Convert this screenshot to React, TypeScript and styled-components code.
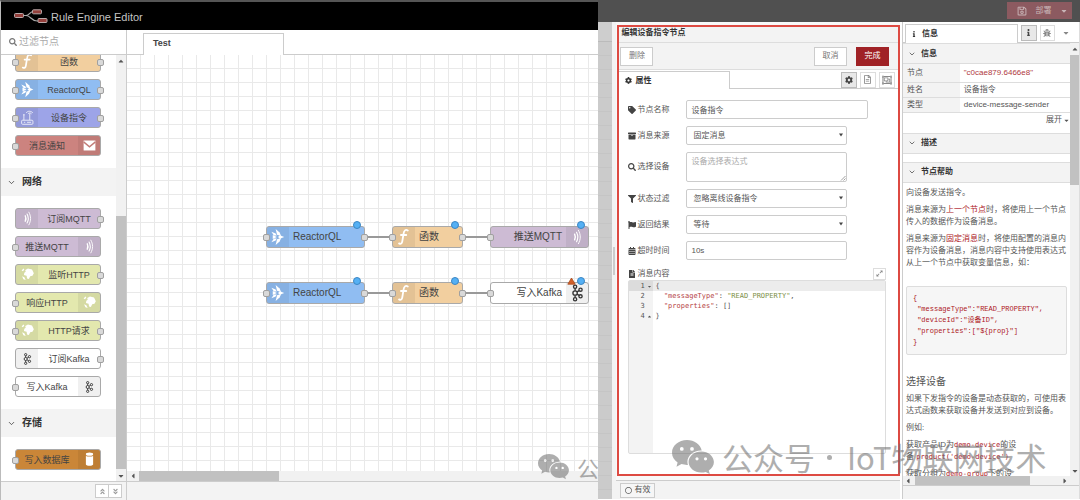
import React from 'react';
import styled, { createGlobalStyle, css } from 'styled-components';
import { ChevronDown } from 'lucide-react';
import {
  FaSearch, FaTag, FaArchive, FaFilter, FaFlag, FaCalendarAlt, FaFileAlt, FaCog,
  FaRegFileAlt, FaRegObjectGroup, FaInfo, FaBug, FaRegSave, FaCaretDown, FaCaretUp,
  FaCaretLeft, FaCaretRight, FaExpandAlt, FaRegCircle, FaAngleDoubleUp,
  FaAngleDoubleDown,
} from 'react-icons/fa';

const GlobalStyle = createGlobalStyle`
  *, *::before, *::after { box-sizing: border-box; }
  body {
    margin: 0;
    background: #fff;
    color: #555;
    font: 8px/12px "Liberation Sans", "Noto Sans CJK SC", sans-serif;
  }
  button, input, select, textarea { font: inherit; color: inherit; margin: 0; }
  svg { display: block; flex: none; }
`;

const line = '#ccc';
const panel = '#f3f3f3';

const Page = styled.div`
  display: flex;
  height: 100vh;
  overflow: hidden;
`;

/* ---------- shared ---------- */

const Bar = styled.div<{ $horizontal?: boolean; $size?: number }>`
  display: flex;
  flex: none;
  flex-direction: ${p => (p.$horizontal ? 'row' : 'column')};
  ${p => (p.$horizontal ? 'height' : 'width')}: ${p => p.$size ?? 10}px;
  background: #f1f1f1;
`;
const BarArrow = styled.span`
  display: flex;
  flex: 0 0 11px;
  align-items: center;
  justify-content: center;
  color: #555;
  svg { width: 8px; height: 8px; }
`;
const BarPart = styled.span<{ $grow: number; $thumb?: boolean }>`
  flex: ${p => p.$grow} 1 0;
  background: ${p => (p.$thumb ? '#c1c1c1' : 'transparent')};
`;

interface ScrollbarProps { before: number; thumb: number; after: number; horizontal?: boolean; size?: number; openEnd?: boolean }

function Scrollbar(p: ScrollbarProps) {
  return (
    <Bar $horizontal={p.horizontal} $size={p.size} aria-hidden>
      <BarArrow>{p.horizontal ? <FaCaretLeft /> : <FaCaretUp />}</BarArrow>
      <BarPart $grow={p.before} />
      <BarPart $grow={p.thumb} $thumb />
      <BarPart $grow={p.after} />
      {!p.openEnd && <BarArrow>{p.horizontal ? <FaCaretRight /> : <FaCaretDown />}</BarArrow>}
    </Bar>
  );
}

/* ---------- node icons ---------- */

type IconName = 'fn' | 'reactor' | 'device' | 'mail' | 'wave' | 'globe' | 'kafka' | 'db';

const icons: Record<IconName, React.ReactNode> = {
  fn: (
    <path d="M14.5 3.6c-2.4-1.4-4 .2-4.4 3L8.7 15c-.4 2.4-1.6 3.300-3.400 2.200M7.300 8.400h5.600" fill="none" stroke="#fff" strokeWidth="1.900" strokeLinecap="round" />
  ),
  reactor: (
    <g fill="#fff">
      <path d="M8 2l4.200 3.800 1.600 3.600-4.300-1.200z" />
      <path d="M8 19l4.200-3.800 1.600-3.600-4.300 1.200z" />
      <path d="M12.500 8.600l4.500 1.900-4.500 1.900-2-1.900z" />
      <path d="M3.600 5l4.400 1.800 1.200 2.200-3-.2z" />
      <path d="M3.600 16l4.400-1.800 1.200-2.200-3 .2z" />
      <path d="M5 8.400l4.400 2.100L5 12.600z" />
    </g>
  ),
  device: (
    <g fill="none" stroke="#fff" strokeWidth="1" opacity=".85">
      <rect x="4" y="13.500" width="12.500" height="4.500" rx="1" />
      <path d="M6.500 15.800h1.500M10 15.800h4.500M6.500 13.500V7.500M13 13.500V6M9 5.500c1.500-2.500 5.500-2.500 7.500 0M11 6.500c1-1.300 3-1.300 4 0M5.500 7.500h2" />
    </g>
  ),
  mail: (
    <g>
      <rect x="4" y="5" width="13" height="11" fill="#fff" />
      <path d="M4 6.500l6.500 5.500L17 6.500" fill="none" stroke="#c27b77" strokeWidth="1.500" />
    </g>
  ),
  wave: (
    <g fill="none" stroke="#fff" strokeLinecap="round">
      <path d="M8 7.500c1 2 1 4 0 6" strokeWidth="1.500" />
      <path d="M10 5.500c1.800 3.300 1.800 6.700 0 10" strokeWidth="1.200" />
      <path d="M12 3.500c2.600 4.700 2.600 9.300 0 14" strokeWidth="1" />
    </g>
  ),
  globe: (
    <g fill="#fff">
      <path d="M8 5.500l3-1.500 4.500 1 2 4-1.500 3-2.500.500-1.500 3-2-.5-.5-3-3-1 .5-2.500 1.500-1z" />
      <path d="M4 6l2-2 1 1-1.500 2zM4.500 12.500l2.500 1 1.500 3-2.500-.8z" />
    </g>
  ),
  kafka: (
    <g fill="none" stroke="#333" strokeWidth="1.400">
      <circle cx="8.500" cy="4" r="1.700" />
      <circle cx="8.500" cy="10.500" r="2.300" />
      <circle cx="8.500" cy="17" r="1.700" />
      <circle cx="14.200" cy="7" r="1.700" />
      <circle cx="14.200" cy="14" r="1.700" />
      <path d="M8.500 5.700v2.500M8.500 12.800v2.500M10.500 9.300l2.200-1.300M10.500 11.700l2.200 1.300" />
    </g>
  ),
  db: (
    <g fill="#fff">
      <path d="M6.500 6.300c1.500 1.300 6.500 1.300 8 0v9.700c-.5 1.900-7.500 1.900-8 0z" />
      <ellipse cx="10.500" cy="4.600" rx="4" ry="1.700" />
    </g>
  ),
};

const IconSvg = ({ name, size = 21 }: { name: IconName; size?: number }) => (
  <svg viewBox="0 0 21 21" width={size} height={size} aria-hidden>{icons[name]}</svg>
);

/* ---------- nodes ---------- */

const nodeBox = css<{ $color: string; $flip?: boolean }>`
  display: flex;
  flex-direction: ${p => (p.$flip ? 'row-reverse' : 'row')};
  background: ${p => p.$color};
  border: 1px solid #a9a9a9;
  border-radius: 3px;
  color: #444;
`;
const PaletteNode = styled.div<{ $color: string; $flip?: boolean }>`
  ${nodeBox}
  position: relative;
  height: 21px;
  font-size: 9px;
`;
const FlowNode = styled.div<{ $color: string; $flip?: boolean }>`
  ${nodeBox}
  position: absolute;
  height: 22px;
  font-size: 10px;
`;
const NodeIcon = styled.span<{ $flip?: boolean }>`
  display: flex;
  flex: 0 0 22px;
  align-items: center;
  justify-content: center;
  background: rgba(0, 0, 0, 0.06);
  border-radius: ${p => (p.$flip ? '0 2px 2px 0' : '2px 0 0 2px')};
`;
const NodeLabel = styled.span<{ $align: string }>`
  display: flex;
  flex: 1;
  align-items: center;
  justify-content: ${p => p.$align};
  padding: 0 4px;
  white-space: nowrap;
`;
const Port = styled.i<{ $side: 'left' | 'right' }>`
  position: absolute;
  top: calc(50% - 3px);
  ${p => p.$side}: -4px;
  width: 7px;
  height: 7px;
  background: #d9d9d9;
  border: 1px solid #a0a0a0;
  border-radius: 2px;
`;
const Changed = styled.i`
  position: absolute;
  top: -6px;
  right: 3px;
  width: 8px;
  height: 8px;
  border: 1px solid #3b86c4;
  border-radius: 50%;
  background: #55b0f4;
`;
const Warning = styled.svg`
  position: absolute;
  top: -6px;
  right: 12px;
`;

interface NodeDef { label: string; color: string; icon: IconName; flip?: boolean; input?: boolean; output?: boolean }

const N: Record<string, NodeDef> = {
  fn: { label: '函数', color: '#f2cf9f', icon: 'fn', input: true, output: true },
  reactor: { label: 'ReactorQL', color: '#90bdf2', icon: 'reactor', input: true, output: true },
  device: { label: '设备指令', color: '#9da4e8', icon: 'device', input: true, output: true },
  mail: { label: '消息通知', color: '#cc837f', icon: 'mail', flip: true, input: true },
  mqttIn: { label: '订阅MQTT', color: '#cdbbd4', icon: 'wave', output: true },
  mqttOut: { label: '推送MQTT', color: '#cdbbd4', icon: 'wave', flip: true, input: true },
  httpIn: { label: '监听HTTP', color: '#e3e8ae', icon: 'globe', output: true },
  httpOut: { label: '响应HTTP', color: '#e3e8ae', icon: 'globe', flip: true, input: true },
  httpReq: { label: 'HTTP请求', color: '#e3e8ae', icon: 'globe', input: true, output: true },
  kafkaIn: { label: '订阅Kafka', color: '#ffffff', icon: 'kafka', output: true },
  kafkaOut: { label: '写入Kafka', color: '#ffffff', icon: 'kafka', flip: true, input: true },
  db: { label: '写入数据库', color: '#ca8638', icon: 'db', flip: true, input: true },
};

const PaletteItem = ({ n }: { n: NodeDef }) => (
  <PaletteNode $color={n.color} $flip={n.flip}>
    <NodeIcon $flip={n.flip}><IconSvg name={n.icon} size={n.icon === 'kafka' ? 14 : 19} /></NodeIcon>
    <NodeLabel $align="center">{n.label}</NodeLabel>
    {n.input && <Port $side="left" />}
    {n.output && <Port $side="right" />}
  </PaletteNode>
);

const FlowItem = ({ n, x, y, w, last, warn }: { n: NodeDef; x: number; y: number; w: number; last?: boolean; warn?: boolean }) => (
  <FlowNode $color={n.color} $flip={n.flip} style={{ left: x, top: y, width: w }}>
    <NodeIcon $flip={n.flip}><IconSvg name={n.icon} size={20} /></NodeIcon>
    <NodeLabel $align={n.flip ? 'flex-end' : 'flex-start'}>{n.label}</NodeLabel>
    <Port $side="left" />
    {!last && <Port $side="right" />}
    {warn && (
      <Warning width="9" height="8" viewBox="0 0 9 8">
        <path d="M4.500 1L8.200 7.200H.8z" fill="#d2602a" stroke="#a84a1c" strokeWidth=".8" />
      </Warning>
    )}
    <Changed />
  </FlowNode>
);

/* ---------- left editor ---------- */

const Editor = styled.section`
  display: flex;
  flex: 598 1 0;
  flex-direction: column;
  min-width: 0;
  overflow: hidden;
  border-top: 2px solid #555;
  border-left: 1px solid #bbb;
`;
const EditorHeader = styled.header`
  display: flex;
  flex: 0 0 28px;
  align-items: center;
  gap: 3px;
  padding: 1px 0 0 13px;
  background: #000;
  color: #c4c4c4;
  font-size: 11px;
`;
const EditorBody = styled.div`
  display: flex;
  flex: 1;
  min-height: 0;
`;
const Palette = styled.aside`
  display: flex;
  flex: 0 0 126px;
  flex-direction: column;
  border-right: 1px solid ${line};
`;
const PaletteSearch = styled.label`
  display: flex;
  flex: 0 0 25px;
  align-items: center;
  gap: 2px;
  padding-left: 8px;
  border-bottom: 1px solid ${line};
  color: #777;
`;
const SearchInput = styled.input`
  width: 90px;
  padding: 0;
  border: 0;
  outline: 0;
  background: none;
  font-size: 10px;
  &::placeholder { color: #aaa; }
`;
const PaletteScroll = styled.div`
  display: flex;
  flex: 1;
  min-height: 0;
`;
const PaletteClip = styled.div`
  flex: 1;
  overflow: hidden;
`;
const PaletteContent = styled.div`
  margin-top: -4px;
`;
const CategoryTitle = styled.h2`
  display: flex;
  align-items: center;
  gap: 6px;
  height: 28px;
  margin: 0;
  padding-left: 6px;
  background: ${panel};
  color: #333;
  font-size: 10px;
`;
const CategoryNodes = styled.div<{ $first?: boolean }>`
  display: flex;
  flex-direction: column;
  gap: 7px;
  padding: ${p => (p.$first ? 0 : 12)}px 15px 12px 14px;
`;
const Footer = styled.footer<{ $height?: number }>`
  display: flex;
  flex: 0 0 ${p => p.$height ?? 19}px;
  align-items: center;
  justify-content: flex-end;
  padding-right: 4px;
  border-top: 1px solid ${line};
  background: ${panel};
`;
const FooterButton = styled.button`
  display: flex;
  align-items: center;
  justify-content: center;
  width: 14px;
  height: 14px;
  margin-left: -1px;
  padding: 0;
  border: 1px solid ${line};
  background: #fff;
  color: #999;
`;
const Workspace = styled.main`
  display: flex;
  flex: 1;
  flex-direction: column;
  min-width: 0;
`;
const FlowTabs = styled.nav`
  display: flex;
  flex: 0 0 25px;
  align-items: flex-end;
  padding-left: 16px;
  box-shadow: inset 0 -1px ${line};
`;
const FlowTab = styled.button`
  width: 141px;
  height: 22px;
  padding: 0 9px 3px;
  border: 1px solid ${line};
  border-bottom: 0;
  background: #fff;
  color: #444;
  font-size: 9px;
  font-weight: bold;
  text-align: left;
`;
const Canvas = styled.div`
  position: relative;
  flex: 1;
  overflow: hidden;
  background-image:
    linear-gradient(to right, transparent 13px, #e9e9e9 13px),
    linear-gradient(to bottom, transparent 13px, #e9e9e9 13px);
  background-size: 14px 14px;
`;
const Wires = styled.svg`
  position: absolute;
  inset: 0;
`;

const Logo = () => (
  <svg width="34" height="16" viewBox="0 0 34 16" aria-hidden>
    <path d="M9 6.500h3c4 0 3-4 8-4M12 6.500c5 0 5 6 12 5.500" fill="none" stroke="#aaa" strokeWidth="1.200" />
    <g fill="#95403c" stroke="#b9aaaa" strokeWidth="1">
      <rect x=".5" y="4.500" width="9" height="4" rx="1" />
      <rect x="18.500" y=".8" width="9" height="4" rx="1" />
      <rect x="24" y="9.500" width="9" height="4" rx="1" />
    </g>
  </svg>
);

function RuleEditor() {
  return (
    <Editor>
      <EditorHeader><Logo />Rule Engine Editor</EditorHeader>
      <EditorBody>
        <Palette>
          <PaletteSearch>
            <FaSearch size={8} />
            <SearchInput aria-label="过滤节点" placeholder="过滤节点" />
          </PaletteSearch>
          <PaletteScroll>
            <PaletteClip>
              <PaletteContent>
                <CategoryNodes $first>
                  {[N.fn, N.reactor, N.device, N.mail].map(n => <PaletteItem key={n.label} n={n} />)}
                </CategoryNodes>
                <CategoryTitle><ChevronDown size={9} />网络</CategoryTitle>
                <CategoryNodes>
                  {[N.mqttIn, N.mqttOut, N.httpIn, N.httpOut, N.httpReq, N.kafkaIn, N.kafkaOut].map(n => (
                    <PaletteItem key={n.label} n={n} />
                  ))}
                </CategoryNodes>
                <CategoryTitle><ChevronDown size={9} />存储</CategoryTitle>
                <CategoryNodes><PaletteItem n={N.db} /></CategoryNodes>
              </PaletteContent>
            </PaletteClip>
            <Scrollbar before={150} thumb={253} after={1} />
          </PaletteScroll>
          <Footer>
            <FooterButton aria-label="collapse"><FaAngleDoubleUp size={7} /></FooterButton>
            <FooterButton aria-label="expand"><FaAngleDoubleDown size={7} /></FooterButton>
          </Footer>
        </Palette>
        <Workspace>
          <FlowTabs><FlowTab>Test</FlowTab></FlowTabs>
          <Canvas>
            <Wires width="100%" height="100%">
              <path d="M238 182h28M335 182h29M238 238h28M335 238h29" stroke="#999" strokeWidth="2" />
            </Wires>
            {[171, 227].map((y, i) => (
              <React.Fragment key={y}>
                <FlowItem n={N.reactor} x={139} y={y} w={99} />
                <FlowItem n={N.fn} x={265} y={y} w={71} />
                <FlowItem n={i ? N.kafkaOut : N.mqttOut} x={363} y={y} w={99} last warn={i === 1} />
              </React.Fragment>
            ))}
          </Canvas>
          <Scrollbar horizontal before={1} thumb={140} after={319} openEnd />
          <Footer />
        </Workspace>
      </EditorBody>
    </Editor>
  );
}

/* ---------- right side ---------- */

const Detail = styled.section`
  display: flex;
  flex: 482 1 0;
  flex-direction: column;
  min-width: 0;
  padding-bottom: 1px;
`;
const DetailHeader = styled.header`
  display: flex;
  flex: 0 0 22px;
  align-items: center;
  justify-content: flex-end;
  padding: 0 8px 1px 0;
  background: #505050;
`;
const Deploy = styled.button`
  display: flex;
  align-items: center;
  justify-content: space-between;
  width: 65px;
  height: 17px;
  padding: 0 4px 0 10px;
  border: 0;
  background: #8c5a60;
  color: #c9b5b7;
`;
const DetailBody = styled.div`
  display: flex;
  flex: 1;
  min-height: 0;
`;
const Shade = styled.div`
  flex: 0 0 14px;
  padding-top: 19px;
  background: #cecece;
  &::before {
    content: '';
    display: block;
    height: 100%;
    border-top: 1px solid #bbb;
    background: repeating-linear-gradient(to bottom, #cbcbcb 0 13px, #c5c5c5 13px 14px);
  }
`;
const Grip = styled.div`
  display: flex;
  flex: 0 0 4px;
  align-items: center;
  background: ${panel};
  &::before {
    content: '';
    width: 2px;
    height: 28px;
    margin-left: 1px;
    background: ${line};
  }
`;
const Tray = styled.div`
  display: flex;
  flex: 285 1 0;
  flex-direction: column;
  min-width: 0;
  padding-top: 3px;
  background: #f8f8f8;
`;
const Frame = styled.form`
  display: flex;
  flex: 1;
  flex-direction: column;
  min-height: 0;
  margin: 0 0 4px 1px;
  border: 2px solid #dd4a42;
  background: #fff;
`;
const TrayTitle = styled.h1`
  flex: 0 0 16px;
  margin: 0;
  padding: 0 2px;
  border-bottom: 1px solid #ddd;
  background: ${panel};
  color: #333;
  font-size: 8px;
  line-height: 11px;
`;
const TrayActions = styled.div`
  display: flex;
  flex: 0 0 27px;
  align-items: center;
  gap: 9px;
  padding: 0 9px 0 1px;
  border-bottom: 1px solid #ddd;
  background: ${panel};
`;
const Action = styled.button<{ $primary?: boolean; $first?: boolean }>`
  width: 33px;
  height: 19px;
  margin-right: ${p => (p.$first ? 'auto' : 0)};
  padding: 0;
  border: 1px solid ${p => (p.$primary ? '#a02226' : line)};
  background: ${p => (p.$primary ? '#a02226' : '#fff')};
  color: ${p => (p.$primary ? '#fff' : '#777')};
`;
const TabRow = styled.div`
  display: flex;
  flex: 0 0 19px;
  align-items: center;
  gap: 3px;
  padding-right: 3px;
  box-shadow: inset 0 -1px ${line};
`;
const Tab = styled.button`
  display: flex;
  flex: 0 0 40%;
  align-items: center;
  align-self: flex-end;
  gap: 3px;
  height: 18px;
  margin-right: auto;
  padding: 0 6px;
  border: solid ${line};
  border-width: 1px 1px 0 0;
  background: #fff;
  color: #333;
  font-weight: bold;
`;
const IconButton = styled.button<{ $on?: boolean }>`
  display: flex;
  align-items: center;
  justify-content: center;
  width: 16px;
  height: 16px;
  padding: 0;
  border: 1px solid ${p => (p.$on ? '#bbb' : '#ddd')};
  background: ${p => (p.$on ? '#e8e8e8' : '#fff')};
  color: ${p => (p.$on ? '#444' : '#888')};
`;
const Fields = styled.div`
  display: flex;
  flex: 1;
  flex-direction: column;
  gap: 7px;
  min-height: 0;
  padding: 11px 12px 20px 9px;
`;
const Row = styled.div`
  display: flex;
  align-items: center;
`;
const Label = styled.label`
  display: flex;
  flex: 0 0 58px;
  align-items: center;
  gap: 1px;
  svg { width: 8px; height: 8px; color: #444; }
`;
const control = css`
  display: block;
  width: 100%;
  height: 19px;
  padding: 0 4px;
  border: 1px solid ${line};
  border-radius: 2px;
  outline: 0;
  background: #fff;
`;
const Control = styled.div<{ $wide?: boolean }>`
  position: relative;
  flex: 0 1 ${p => (p.$wide ? 182 : 161)}px;
  > svg { position: absolute; right: 1px; bottom: 1px; pointer-events: none; }
`;
const Input = styled.input`${control}`;
const Select = styled.select`
  ${control}
  padding: 0 6px;
  appearance: none;
  + svg { right: 4px; bottom: 8px; color: #444; }
`;
const Textarea = styled.textarea`
  ${control}
  height: 30px;
  padding: 3px 4px;
  resize: none;
  &::placeholder { color: #aaa; }
`;
const Payload = styled.div`
  display: flex;
  flex: 1;
  flex-direction: column;
  min-height: 0;
`;
const PayloadHead = styled.div`
  display: flex;
  flex: 0 0 13px;
  align-items: center;
  justify-content: space-between;
`;
const Expand = styled(IconButton)`
  width: 13px;
  height: 12px;
`;
const Code = styled.div`
  display: flex;
  flex: 1;
  flex-direction: column;
  border: 1px solid #ddd;
  border-radius: 2px;
  background: linear-gradient(to right, #f3f3f3 24px, #fff 24px);
  font: 7px/10px "DejaVu Sans Mono", monospace;
`;
const CodeLine = styled.div<{ $active?: boolean }>`
  display: flex;
  background: ${p => (p.$active ? '#ececec' : 'transparent')};
  white-space: pre;
`;
const LineNo = styled.span<{ $active?: boolean }>`
  display: flex;
  flex: 0 0 24px;
  align-items: center;
  margin-right: 2px;
  padding-left: 11px;
  gap: 2px;
  background: ${p => (p.$active ? '#dcdcdc' : 'transparent')};
`;
const Key = styled.span`color: #b5413f;`;
const Str = styled.span`color: #7d9048;`;
const TrayFooter = styled(Footer)`
  justify-content: flex-start;
  padding-left: 4px;
`;
const Valid = styled.button`
  display: flex;
  align-items: center;
  gap: 2px;
  height: 15px;
  padding: 0 4px;
  border: 1px solid ${line};
  background: #f6f6f6;
  color: #555;
`;

const SelectField = ({ id, value }: { id: string; value: string }) => (
  <Control>
    <Select id={id}><option>{value}</option></Select>
    <svg width="4" height="4" viewBox="0 0 5 5"><path d="M0 .5h5L2.500 4.500z" fill="currentColor" /></svg>
  </Control>
);

function EditTray() {
  return (
    <Tray>
      <Frame onSubmit={e => e.preventDefault()}>
        <TrayTitle>编辑设备指令节点</TrayTitle>
        <TrayActions>
          <Action type="button" $first>删除</Action>
          <Action type="button">取消</Action>
          <Action $primary>完成</Action>
        </TrayActions>
        <TabRow>
          <Tab type="button"><FaCog size={7} />属性</Tab>
          <IconButton type="button" $on aria-label="属性"><FaCog size={8} /></IconButton>
          <IconButton type="button" aria-label="描述"><FaRegFileAlt size={9} /></IconButton>
          <IconButton type="button" aria-label="外观"><FaRegObjectGroup size={10} /></IconButton>
        </TabRow>
        <Fields>
          <Row>
            <Label htmlFor="name"><FaTag />节点名称</Label>
            <Control $wide><Input id="name" defaultValue="设备指令" /></Control>
          </Row>
          <Row>
            <Label htmlFor="source"><FaArchive />消息来源</Label>
            <SelectField id="source" value="固定消息" />
          </Row>
          <Row>
            <Label htmlFor="device"><FaSearch />选择设备</Label>
            <Control>
              <Textarea id="device" placeholder="设备选择表达式" />
              <svg width="6" height="6" viewBox="0 0 6 6"><path d="M1 5.500L5.500 1M3.500 5.500l2-2" stroke="#888" strokeWidth=".8" /></svg>
            </Control>
          </Row>
          <Row>
            <Label htmlFor="state"><FaFilter />状态过滤</Label>
            <SelectField id="state" value="忽略离线设备指令" />
          </Row>
          <Row>
            <Label htmlFor="result"><FaFlag />返回结果</Label>
            <SelectField id="result" value="等待" />
          </Row>
          <Row>
            <Label htmlFor="timeout"><FaCalendarAlt />超时时间</Label>
            <Control><Input id="timeout" defaultValue="10s" /></Control>
          </Row>
          <Payload>
            <PayloadHead>
              <Label as="span"><FaFileAlt />消息内容</Label>
              <Expand type="button" aria-label="展开编辑器"><FaExpandAlt size={7} /></Expand>
            </PayloadHead>
            <Code>
              <CodeLine $active><LineNo $active>1<FaCaretDown size={5} /></LineNo><span>{'{'}</span></CodeLine>
              <CodeLine><LineNo>2</LineNo><span>{'  '}<Key>"messageType"</Key>: <Str>"READ_PROPERTY"</Str>,</span></CodeLine>
              <CodeLine><LineNo>3</LineNo><span>{'  '}<Key>"properties"</Key>: []</span></CodeLine>
              <CodeLine><LineNo>4<FaCaretUp size={5} /></LineNo><span>{'}'}</span></CodeLine>
            </Code>
          </Payload>
        </Fields>
      </Frame>
      <TrayFooter><Valid><FaRegCircle size={7} />有效</Valid></TrayFooter>
    </Tray>
  );
}

const Sidebar = styled.aside`
  display: flex;
  flex: 177 1 0;
  flex-direction: column;
  min-width: 0;
  margin-left: 2px;
  border-left: 1px solid ${line};
  border-right: 1px solid #ddd;
`;
const SideTabs = styled(TabRow)`
  flex-basis: 21px;
  padding: 0 5px 0 2px;
`;
const SideTab = styled(Tab)`
  flex-basis: 113px;
  gap: 5px;
  height: 19px;
  padding: 0 5px;
  border-left-width: 1px;
`;
const MenuButton = styled(IconButton)`
  border: 0;
`;
const SideMain = styled.div`
  display: flex;
  flex: 1;
  min-height: 0;
`;
const SideContent = styled.div`
  flex: 1;
  min-width: 0;
  overflow: hidden;
`;
const SideScroll = styled.div`
  padding-right: 9px;
  background: #f1f1f1;
`;
const SectionTitle = styled.h2`
  display: flex;
  align-items: center;
  gap: 5px;
  height: 21px;
  margin: 0;
  padding-left: 5px;
  border: solid #ddd;
  border-width: 1px 0;
  background: ${panel};
  color: #333;
  font-size: 8px;
  svg { color: #333; }
`;
const Spacer = styled.div`
  height: 8px;
`;
const Props = styled.table`
  width: 100%;
  border-collapse: collapse;
  table-layout: fixed;
  th, td {
    height: 15px;
    padding: 0 4px;
    border-bottom: 1px solid #ddd;
    font-weight: normal;
    text-align: left;
  }
  th { width: 34%; background: ${panel}; }
  tr:first-child > * { height: 18px; }
`;
const Id = styled.span`color: #b03a3e;`;
const More = styled.button`
  display: flex;
  align-items: center;
  justify-content: flex-end;
  gap: 1px;
  width: 100%;
  height: 20px;
  padding: 0 0 5px;
  border: 0;
  background: none;
`;
const Help = styled.article`
  padding: 4px 3px 0 3px;
  p { margin: 0 0 5px; }
  b { color: #ad1625; font-weight: normal; }
  code { color: #ad1625; font: 7px/11px "DejaVu Sans Mono", "Noto Sans CJK SC", monospace; }
  h3 { margin: 20px 0 4px; font-size: 10px; font-weight: normal; line-height: 14px; }
  pre {
    margin: 17px 0 0;
    padding: 6px;
    border: 1px solid #ddd;
    border-radius: 2px;
    background: #f6f6f6;
    color: #ad1625;
    font: 7px/11px "Liberation Mono", "Noto Sans CJK SC", monospace;
  }
`;

function InfoSidebar() {
  return (
    <Sidebar>
      <SideTabs>
        <SideTab><FaInfo size={6} />信息</SideTab>
        <IconButton $on aria-label="信息"><FaInfo size={7} /></IconButton>
        <IconButton aria-label="调试"><FaBug size={8} /></IconButton>
        <MenuButton aria-label="更多"><FaCaretDown size={8} /></MenuButton>
      </SideTabs>
      <SideMain>
        <SideContent>
          <SectionTitle><ChevronDown size={8} />信息</SectionTitle>
          <Props>
            <tbody>
              <tr><th scope="row">节点</th><td><Id>"c0cae879.6466e8"</Id></td></tr>
              <tr><th scope="row">姓名</th><td>设备指令</td></tr>
              <tr><th scope="row">类型</th><td>device-message-sender</td></tr>
            </tbody>
          </Props>
          <More>展开<FaCaretDown size={7} /></More>
          <SectionTitle><ChevronDown size={8} />描述</SectionTitle>
          <Spacer />
          <SectionTitle><ChevronDown size={8} />节点帮助</SectionTitle>
          <Help>
            <p>向设备发送指令。</p>
            <p>消息来源为<b>上一个节点</b>时，将使用上一个节点传入的数据作为设备消息。</p>
            <p>消息来源为<b>固定消息</b>时，将使用配置的消息内容作为设备消息，消息内容中支持使用表达式从上一个节点中获取变量信息，如：</p>
            <pre>{'{\n "messageType":"READ_PROPERTY",\n "deviceId":"设备ID",\n "properties":["${prop}"]\n}'}</pre>
            <h3>选择设备</h3>
            <p>如果下发指令的设备是动态获取的，可使用表达式函数来获取设备并发送到对应到设备。</p>
            <p>例如:</p>
            <p>获取产品ID为<code>demo-device</code>的设<br />备 <code>product('demo-device')</code></p>
            <p>获取分组为<code>demo-group</code>下的设</p>
          </Help>
        </SideContent>
        <Scrollbar before={1} thumb={130} after={280} size={9} />
      </SideMain>
      <SideScroll>
        <Scrollbar horizontal before={1} thumb={115} after={29} size={9} />
      </SideScroll>
      <Footer as="div" $height={14} />
    </Sidebar>
  );
}

/* ---------- watermark ---------- */

const Mark = styled.div<{ $small?: boolean }>`
  position: absolute;
  left: ${p => (p.$small ? 538 : 672)}px;
  bottom: ${p => (p.$small ? 18 : 22)}px;
  display: flex;
  align-items: center;
  gap: 8px;
  width: ${p => (p.$small ? '60px' : 'auto')};
  overflow: hidden;
  color: #6c6c6c;
  opacity: 0.55;
  font: ${p => (p.$small ? '22px/30px' : '31px/42px')} "Noto Sans CJK SC", sans-serif;
  white-space: nowrap;
  pointer-events: none;
`;
const Dot = styled.i`
  width: 5px;
  height: 5px;
  margin: 0 7px 0 4px;
  border-radius: 50%;
  background: currentColor;
`;
const WeChat = ({ width }: { width: number }) => (
  <svg width={width} viewBox="0 0 42 34" aria-hidden>
    <path fillRule="evenodd" fill="currentColor" d="M15 0C6.700 0 0 5.600 0 12.700c0 4 2.200 7.400 5.600 9.700L4.500 26.700l5-2.600c1.800.5 3.600.8 5.500.8h.9a11 11 0 0 1-.5-3.200c0-6.300 6-11.300 13.400-11.300h.9C28.400 4.400 22.300 0 15 0zM9.800 7a1.900 1.900 0 1 1 0 3.800 1.900 1.900 0 0 1 0-3.800zM20 7a1.900 1.900 0 1 1 0 3.800A1.900 1.900 0 0 1 20 7z" />
    <path fillRule="evenodd" fill="currentColor" d="M29.300 11.600c-7 0-12.700 4.700-12.700 10.500s5.700 10.500 12.700 10.500c1.600 0 3-.2 4.400-.6l4.100 2.100-1-3.600c3.100-1.900 5.100-4.900 5.100-8.400 0-5.800-5.700-10.500-12.600-10.500zM25 17.200a1.600 1.600 0 1 1 0 3.200 1.600 1.600 0 0 1 0-3.200zM33.500 17.200a1.600 1.600 0 1 1 0 3.200 1.600 1.600 0 0 1 0-3.200z" />
  </svg>
);

export default function App() {
  return (
    <Page>
      <GlobalStyle />
      <RuleEditor />
      <Detail>
        <DetailHeader>
          <Deploy><FaRegSave size={10} /><span>部署</span><FaCaretDown size={8} /></Deploy>
        </DetailHeader>
        <DetailBody>
          <Shade />
          <Grip />
          <EditTray />
          <InfoSidebar />
        </DetailBody>
      </Detail>
      <Mark $small><WeChat width={31} /><span>公</span></Mark>
      <Mark><WeChat width={42} /><span>公众号</span><Dot /><span>IoT物联网技术</span></Mark>
    </Page>
  );
}
